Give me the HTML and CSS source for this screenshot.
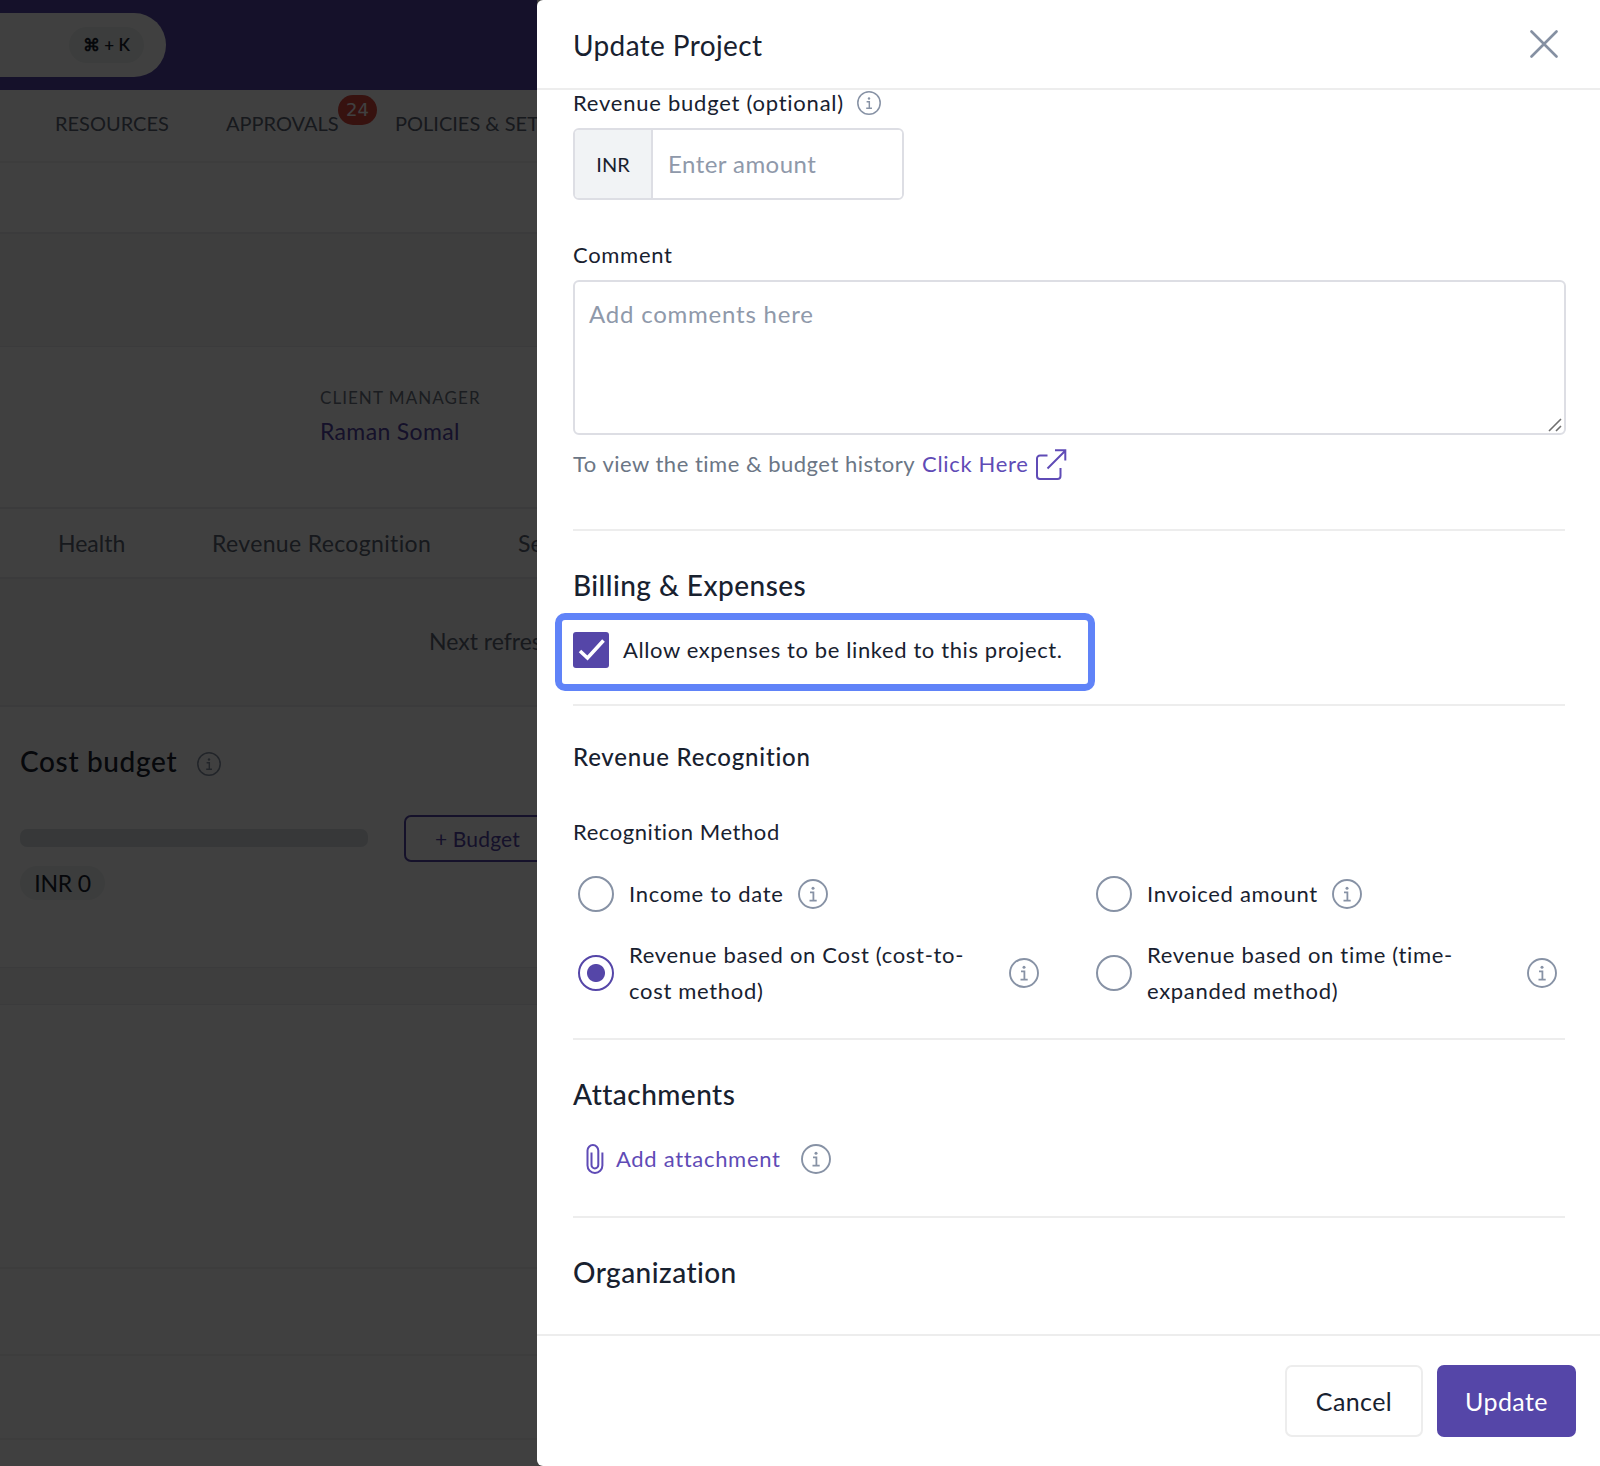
FILE: index.html
```
<!DOCTYPE html>
<html lang="en">
  <head>
    <meta charset="utf-8" />
    <title>Update Project</title>
    <link rel="stylesheet" href="styles.css" />
  </head>
  <body>
    <svg class="sprite">
      <symbol id="info" viewBox="0 0 30 30">
        <circle cx="15" cy="15" r="14" fill="none" stroke="currentColor" stroke-width="1.9" />
        <circle cx="15" cy="9.3" r="1.5" fill="currentColor" />
        <path d="M12 13.4h3.4v8M11.5 21.6h7.2" fill="none" stroke="currentColor" stroke-width="1.8" />
      </symbol>
    </svg>

    <div class="page">
      <div class="topbar">
        <div class="search"><span class="shortcut">⌘ + K</span></div>
      </div>
      <nav class="menu">
        <a class="menu-resources">RESOURCES</a>
        <a class="menu-approvals">APPROVALS<span class="badge">24</span></a>
        <a class="menu-policies">POLICIES &amp; SET</a>
      </nav>
      <div class="subbar"></div>
      <div class="band"></div>
      <div class="client">
        <div class="client-title">CLIENT MANAGER</div>
        <a class="client-name">Raman Somal</a>
      </div>
      <div class="tabs">
        <a class="tab-health">Health</a>
        <a class="tab-revenue">Revenue Recognition</a>
        <a class="tab-settings">Se</a>
      </div>
      <div class="refresh"><span>Next refres</span></div>
      <div class="budget">
        <div class="budget-head">
          <h3>Cost budget</h3>
          <svg class="info info-small"><use href="#info" /></svg>
        </div>
        <div class="budget-row">
          <div class="progress"></div>
          <button class="add-budget">+ Budget</button>
        </div>
        <span class="amount">INR 0</span>
      </div>
      <div class="gap"></div>
      <div class="row row-tall"></div>
      <div class="row"></div>
      <div class="row row-short"></div>
      <div class="row row-last"></div>
    </div>

    <div class="overlay"></div>

    <form class="drawer" action="#">
      <div class="drawer-header">
        <h1>Update Project</h1>
        <svg class="close" viewBox="0 0 28 28">
          <path d="M1.5 1.5l25 25M26.5 1.5l-25 25" />
        </svg>
      </div>

      <div class="drawer-body">
        <div class="field-label">
          <label class="t-budget" for="revenue">Revenue budget (optional)</label>
          <svg class="info info-small"><use href="#info" /></svg>
        </div>
        <div class="input-group">
          <span class="currency">INR</span>
          <input id="revenue" type="text" placeholder="Enter amount" />
        </div>

        <label class="field-label comment-label" for="comment">Comment</label>
        <div class="comment-box">
          <textarea id="comment" placeholder="Add comments here"></textarea>
          <svg class="grip" viewBox="0 0 14 14">
            <path d="M1 13L13 1M8 13l5-5" />
          </svg>
        </div>
        <div class="history">
          <span class="t-history">To view the time &amp; budget history</span>
          <a>Click Here</a>
          <svg class="external" viewBox="0 0 31 31">
            <path d="M11.5 6.5H4a3 3 0 0 0-3 3V27a3 3 0 0 0 3 3h17.5a3 3 0 0 0 3-3v-8M11.5 19.5L29.5 1.5M19 1.2h10.3v10.3" />
          </svg>
        </div>

        <hr class="hr-history" />

        <h2>Billing &amp; Expenses</h2>
        <label class="highlight">
          <span class="checkbox">
            <svg viewBox="0 0 36 36"><path d="M7 19l7.5 7L30.5 8.5" /></svg>
          </span>
          <span class="t-allow">Allow expenses to be linked to this project.</span>
        </label>

        <hr class="hr-billing" />

        <h3 class="recognition">Revenue Recognition</h3>
        <div class="field-label method">Recognition Method</div>
        <div class="options">
          <label class="option">
            <span class="radio"></span>
            <span class="option-text">Income to date</span>
            <svg class="info"><use href="#info" /></svg>
          </label>
          <label class="option">
            <span class="radio"></span>
            <span class="option-text">Invoiced amount</span>
            <svg class="info"><use href="#info" /></svg>
          </label>
          <label class="option">
            <span class="radio checked"></span>
            <span class="option-text long">Revenue based on Cost (cost-to-cost method)</span>
            <svg class="info"><use href="#info" /></svg>
          </label>
          <label class="option">
            <span class="radio"></span>
            <span class="option-text long">Revenue based on time (time-expanded method)</span>
            <svg class="info"><use href="#info" /></svg>
          </label>
        </div>

        <hr class="hr-options" />

        <h2>Attachments</h2>
        <div class="attach">
          <svg class="clip" viewBox="0 0 18 30">
            <path d="M5.5 8.5v12.5a3.4 3.4 0 0 0 6.8 0V6.5a5.3 5.3 0 0 0-10.8 0V21.5a7.4 7.4 0 0 0 14.9 0V8.5" />
          </svg>
          <a>Add attachment</a>
          <svg class="info"><use href="#info" /></svg>
        </div>

        <hr class="hr-attach" />

        <h2>Organization</h2>
      </div>

      <div class="drawer-footer">
        <button class="btn" type="button">Cancel</button>
        <button class="btn btn-primary" type="submit">Update</button>
      </div>
    </form>
  </body>
</html>
```

FILE: styles.css
```
* {
  box-sizing: border-box;
  margin: 0;
  padding: 0;
}

body {
  position: relative;
  width: 1600px;
  height: 1466px;
  overflow: hidden;
  font-family: Lato, "Open Sans", sans-serif;
  font-size: 22px;
  font-variant-ligatures: none;
  color: #18212f;
  background: #fff;
}

input,
textarea,
button {
  font-family: inherit;
  color: inherit;
  outline: none;
}

.sprite {
  position: absolute;
  width: 0;
  height: 0;
}

.info {
  flex: none;
  width: 30px;
  height: 30px;
  color: #8792a5;
}

.info-small {
  width: 24px;
  height: 24px;
}

/* page behind the drawer */
.page {
  width: 537px;
  height: 1466px;
  overflow: hidden;
  white-space: nowrap;
}

.topbar {
  height: 90px;
  padding-top: 13px;
  background: #5546a8;
}

.search {
  display: flex;
  align-items: center;
  justify-content: flex-end;
  width: 166px;
  height: 64px;
  padding-right: 22px;
  border-radius: 0 32px 32px 0;
  background: #fff;
}

.shortcut {
  width: 75px;
  height: 36px;
  line-height: 36px;
  border-radius: 18px;
  background: #eef3f1;
  text-align: center;
  font-size: 17px;
  font-weight: 600;
}

.menu {
  display: flex;
  height: 73px;
  padding: 20px 0 0 55px;
  border-bottom: 2px solid #f3f3f4;
  font-size: 20px;
  line-height: 26px;
  color: #5c6675;
}

.menu a,
.tabs a {
  flex: none;
}

.menu-resources {
  width: 171px;
}

.menu-approvals {
  position: relative;
  width: 169px;
}

.badge {
  position: absolute;
  top: -15px;
  left: 112px;
  width: 39px;
  height: 30px;
  border-radius: 15px;
  background: #d9483f;
  color: #fff;
  font-family: "DejaVu Sans", sans-serif;
  font-size: 18px;
  line-height: 30px;
  text-align: center;
}

.subbar {
  height: 71px;
  border-bottom: 2px solid #ececee;
}

.band {
  height: 113px;
  border-bottom: 1px solid #ececee;
  background: #f5f5f5;
}

.client {
  height: 162px;
  padding: 40px 0 0 320px;
  border-bottom: 2px solid #ececee;
}

.client-title {
  font-size: 17px;
  line-height: 22px;
  letter-spacing: 1.05px;
  color: #6b7482;
}

.client-name {
  display: block;
  margin-top: 8px;
  font-size: 23px;
  line-height: 28px;
  letter-spacing: 0.35px;
  color: #5546a8;
}

.tabs {
  display: flex;
  height: 70px;
  border-bottom: 2px solid #ececee;
  font-size: 23px;
  line-height: 69px;
  color: #5c6675;
}

.tab-health {
  width: 212px;
  padding-left: 58px;
}

.tab-revenue {
  width: 306px;
  letter-spacing: 0.35px;
}

.refresh {
  height: 128px;
  padding: 47px 0 0 429px;
  border-bottom: 2px solid #ececee;
  background: #f5f5f5;
  font-size: 23px;
  line-height: 30px;
  color: #5c6675;
}

.budget {
  height: 260px;
  padding: 36px 0 0 20px;
}

.budget-head {
  display: flex;
  align-items: center;
  height: 36px;
}

.budget h3 {
  width: 177px;
  font-size: 28px;
  font-weight: 500;
  letter-spacing: 0.65px;
}

.budget-head .info {
  margin-top: 6px;
}

.budget-row {
  display: flex;
  align-items: center;
  height: 48px;
  margin-top: 35px;
}

.progress {
  flex: none;
  width: 348px;
  height: 18px;
  margin-right: 36px;
  border-radius: 7px;
  background: #dadfe4;
}

.add-budget {
  flex: none;
  width: 180px;
  height: 47px;
  padding-left: 29px;
  border: 2px solid #5546a8;
  border-radius: 7px;
  background: none;
  color: #5546a8;
  font-size: 21px;
  letter-spacing: 0.15px;
  text-align: left;
}

.amount {
  display: inline-block;
  width: 85px;
  height: 34px;
  margin-top: 4px;
  border-radius: 17px;
  background: #eef3f1;
  font-size: 23px;
  line-height: 34px;
  letter-spacing: -0.2px;
  text-align: center;
}

.gap {
  height: 38px;
  border-top: 1px solid #ececee;
  border-bottom: 1px solid #ececee;
  background: #f5f5f5;
}

.row {
  height: 87px;
  border-bottom: 2px solid #f2f2f3;
}

.row-tall {
  height: 264px;
}

.row-short {
  height: 84px;
}

.row-last {
  border: 0;
}

.overlay {
  position: absolute;
  top: 0;
  left: 0;
  width: 100%;
  height: 100%;
  background: rgba(0, 0, 0, 0.75);
}

/* drawer */
.drawer {
  position: absolute;
  top: 0;
  right: 0;
  display: flex;
  flex-direction: column;
  width: 1063px;
  height: 1466px;
  border-radius: 6px 0 0 6px;
  background: #fff;
  letter-spacing: 0.69px;
}

.drawer-header {
  display: flex;
  align-items: center;
  justify-content: space-between;
  height: 90px;
  padding: 0 42px 0 36px;
  border-bottom: 2px solid #ededed;
}

.drawer-header h1 {
  margin-top: 2px;
  font-size: 28px;
  font-weight: 400;
  letter-spacing: 0.37px;
}

.close {
  width: 28px;
  height: 28px;
  fill: none;
  stroke: #8590a2;
  stroke-width: 2.6;
  stroke-linecap: round;
}

.drawer-body {
  flex: 1;
  overflow: hidden;
  padding: 0 35px 0 36px;
}

.field-label {
  display: flex;
  align-items: center;
  height: 26px;
  line-height: 26px;
}

.t-budget {
  width: 284px;
  letter-spacing: 0.76px;
  white-space: nowrap;
}

.input-group {
  display: flex;
  width: 331px;
  height: 72px;
  margin-top: 12px;
  border: 2px solid #dddee4;
  border-radius: 6px;
  overflow: hidden;
}

.currency {
  width: 78px;
  border-right: 2px solid #dddee4;
  background: #f1f3f5;
  font-size: 20px;
  line-height: 68px;
  letter-spacing: 0;
  text-align: center;
}

.input-group input {
  flex: 1;
  min-width: 0;
  padding: 0 0 1px 15px;
  border: 0;
  font-size: 24px;
  letter-spacing: 0.45px;
}

::placeholder {
  color: #8f99aa;
  opacity: 1;
}

.comment-label {
  margin-top: 42px;
}

.comment-box {
  position: relative;
  height: 155px;
  margin-top: 12px;
}

textarea {
  display: block;
  width: 993px;
  height: 155px;
  padding: 17px 14px;
  border: 2px solid #dddee4;
  border-radius: 6px;
  resize: none;
  font-size: 24px;
  line-height: 30px;
  letter-spacing: 0.78px;
}

.grip {
  position: absolute;
  right: 3px;
  bottom: 3px;
  width: 14px;
  height: 14px;
  fill: none;
  stroke: #6f6f6f;
  stroke-width: 1.6;
}

.history {
  display: flex;
  align-items: center;
  height: 31px;
  margin-top: 14px;
  line-height: 29px;
  color: #6b7685;
}

.history a,
.history span {
  height: 31px;
}

.history a,
.attach a {
  color: #5f4bb6;
}

.t-history {
  width: 349px;
  letter-spacing: 0.5px;
  white-space: nowrap;
}

.history a {
  width: 114px;
}

.external {
  width: 31px;
  height: 31px;
  fill: none;
  stroke: #5f4bb6;
  stroke-width: 2;
}

hr {
  height: 2px;
  border: 0;
  background: #ededed;
}

.hr-history {
  margin: 49px 0 37px;
}

.hr-billing {
  margin: 13px 0 36px;
}

.hr-options {
  margin: 29px 0 37px;
}

.hr-attach {
  margin: 42px 0 37px;
}

h2 {
  font-size: 28px;
  font-weight: 500;
  line-height: 34px;
  letter-spacing: 0.45px;
}

.highlight {
  display: flex;
  width: 540px;
  height: 78px;
  margin: 11px 0 0 -18px;
  padding: 12px 0 0 11px;
  border: 7px solid #6083f8;
  border-radius: 10px;
  line-height: 36px;
  letter-spacing: 0.61px;
  white-space: nowrap;
}

.checkbox {
  width: 36px;
  height: 36px;
  margin-right: 14px;
  border-radius: 3px;
  background: #5546a8;
}

.checkbox svg {
  display: block;
  fill: none;
  stroke: #fff;
  stroke-width: 3.6;
}

.recognition {
  font-size: 24px;
  font-weight: 500;
  line-height: 30px;
  letter-spacing: 0.8px;
}

.method {
  margin-top: 47px;
  letter-spacing: 0.57px;
}

.options {
  display: grid;
  grid-template-columns: 466px 466px;
  gap: 25px 52px;
  margin: 31px 0 0 5px;
}

.option {
  display: flex;
  align-items: center;
  line-height: 36px;
}

.radio {
  flex: none;
  width: 36px;
  height: 36px;
  margin-right: 15px;
  border: 2px solid #8792a5;
  border-radius: 50%;
}

.radio.checked {
  border-color: #5546a8;
  background: radial-gradient(circle, #5546a8 8.5px, transparent 9.5px);
}

.option-text {
  margin-right: 14px;
}

.option-text.long {
  width: 366px;
}

.attach {
  display: flex;
  align-items: center;
  height: 30px;
  margin-top: 33px;
  padding-left: 13px;
}

.attach a {
  width: 185px;
  padding-bottom: 1px;
}

.clip {
  width: 18px;
  height: 30px;
  margin-right: 12px;
  fill: none;
  stroke: #5f4bb6;
  stroke-width: 2;
}

.drawer-footer {
  display: flex;
  justify-content: flex-end;
  gap: 14px;
  height: 132px;
  padding: 29px 24px 0 0;
  border-top: 2px solid #ededed;
}

.btn {
  width: 138px;
  height: 72px;
  border: 2px solid #ededed;
  border-radius: 7px;
  background: #fff;
  font-size: 25px;
  letter-spacing: 0.4px;
}

.btn-primary {
  width: 139px;
  border-color: #5546a8;
  background: #5546a8;
  color: #fff;
}
```
